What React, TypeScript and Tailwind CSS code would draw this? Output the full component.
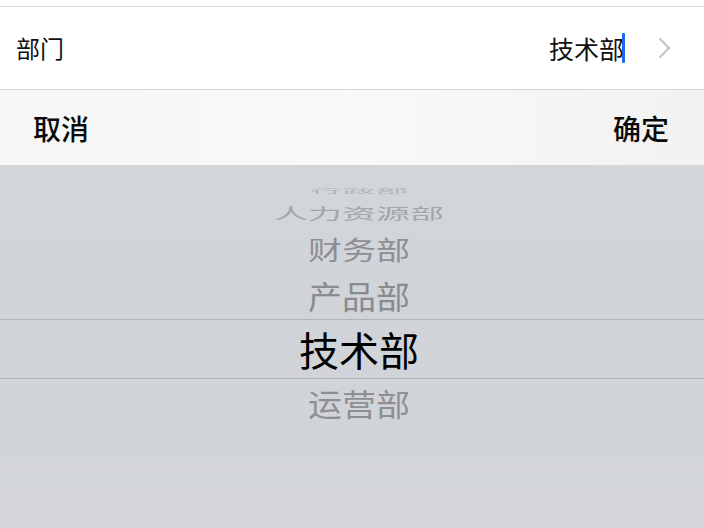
import React from 'react';

const font = { fontFamily: '"Noto Sans CJK SC", "Noto Sans", sans-serif' };

const departments = [
  { name: '行政部', h: 'h-[20px]', cls: 'text-[#b4b6bb] text-[33px] scale-y-[0.18]' },
  { name: '人力资源部', h: 'h-[26px]', cls: 'text-[#a4a6ab] text-[34px] scale-y-[0.45]' },
  { name: '财务部', h: 'h-[46px]', cls: 'text-[#8e8f93] text-[34px] scale-y-[0.76]' },
  { name: '产品部', h: 'h-[47px]', cls: 'text-[#8a8b8f] text-[34px] scale-y-[0.92]' },
];

export default function App() {
  return (
    <div className="w-[704px] h-[528px] overflow-hidden bg-[#d1d4d9] flex flex-col" style={font}>
      {/* form row */}
      <div className="h-[7px] bg-white border-b border-[#dcdcde]" />
      <div className="h-[83px] bg-white border-b border-[#d6d6d8] flex items-center pl-[16px] pr-[32px]">
        <span className="text-[24px] text-[#111] leading-none">部门</span>
        <div className="ml-auto flex items-center">
          <span className="text-[25px] text-[#111] leading-none">技术部</span>
          <span className="w-[3px] h-[30px] bg-[#1f66f2] ml-[-2px] rounded-[1px]" />
          <svg className="ml-[33px]" width="14" height="22" viewBox="0 0 14 22" fill="none">
            <polyline points="2,2 11,11 2,20" stroke="#c4c4c8" strokeWidth="2.2" strokeLinecap="round" strokeLinejoin="round" />
          </svg>
        </div>
      </div>

      {/* toolbar */}
      <div className="h-[75px] bg-gradient-to-r from-[#f6f6f6] via-[#f9f9f9] to-[#f2f2f2] flex items-center justify-between pl-[33px] pr-[35px]">
        <span className="text-[28px] font-medium text-[#0a0a0a] leading-none">取消</span>
        <span className="text-[28px] font-medium text-[#0a0a0a] leading-none">确定</span>
      </div>

      {/* picker wheel */}
      <div className="flex-1 flex flex-col pt-[15px] pl-[14px] bg-gradient-to-b from-[#d2d5da] via-[#d0d3d8] to-[#d3d5da]">
        {departments.map((d) => (
          <div key={d.name} className={`${d.h} flex items-center justify-center overflow-visible`}>
            <span className={`${d.cls} leading-none inline-block`}>{d.name}</span>
          </div>
        ))}
        <div className="h-[60px] -ml-[14px] pl-[14px] border-y border-[#b2b4b9] flex items-center justify-center">
          <span className="text-[40px] text-black leading-none">技术部</span>
        </div>
        <div className="h-[48px] flex items-center justify-center">
          <span className="text-[34px] text-[#8e8f93] leading-none inline-block scale-y-[0.9]">运营部</span>
        </div>
      </div>
    </div>
  );
}
